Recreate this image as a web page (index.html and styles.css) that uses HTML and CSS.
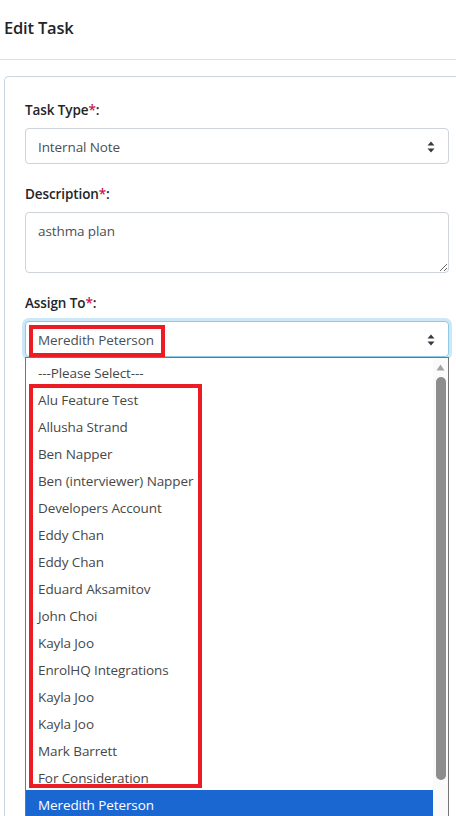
FILE: index.html
```html
<!DOCTYPE html>
<html lang="en">
<head>
<meta charset="utf-8">
<title>Edit Task</title>
<link rel="stylesheet" href="styles.css">
</head>
<body>
<header class="page-header">
  <h1 class="page-title">Edit Task</h1>
</header>
<main class="page-main">
  <div class="card">
    <div class="form-group">
      <label class="form-label">Task Type<span class="req">*</span>:</label>
      <div class="select">
        <span class="select-value">Internal Note</span>
        <svg class="select-arrow" width="8" height="12" viewBox="0 0 8 12"><path d="M4 0.5L7.5 4.5H0.5Z M4 11.5L7.5 7.5H0.5Z" fill="#343a40"/></svg>
      </div>
    </div>
    <div class="form-group">
      <label class="form-label">Description<span class="req">*</span>:</label>
      <textarea class="textarea">asthma plan</textarea>
    </div>
    <div class="form-group">
      <label class="form-label">Assign To<span class="req">*</span>:</label>
      <div class="select-wrap">
        <div class="select select-focus">
          <span class="select-value">Meredith Peterson</span>
          <svg class="select-arrow" width="8" height="12" viewBox="0 0 8 12"><path d="M4 0.5L7.5 4.5H0.5Z M4 11.5L7.5 7.5H0.5Z" fill="#343a40"/></svg>
          <div class="mark mark-value"></div>
        </div>
        <div class="dropdown">
          <ul class="options">
            <li class="option">---Please Select---</li>
            <li class="option">Alu Feature Test</li>
            <li class="option">Allusha Strand</li>
            <li class="option">Ben Napper</li>
            <li class="option">Ben (interviewer) Napper</li>
            <li class="option">Developers Account</li>
            <li class="option">Eddy Chan</li>
            <li class="option">Eddy Chan</li>
            <li class="option">Eduard Aksamitov</li>
            <li class="option">John Choi</li>
            <li class="option">Kayla Joo</li>
            <li class="option">EnrolHQ Integrations</li>
            <li class="option">Kayla Joo</li>
            <li class="option">Kayla Joo</li>
            <li class="option">Mark Barrett</li>
            <li class="option">For Consideration</li>
            <li class="option option-selected">Meredith Peterson</li>
          </ul>
          <div class="scrollbar">
            <svg class="scroll-up" width="9" height="7" viewBox="0 0 9 7"><path d="M4.5 0.5L8.5 6.5H0.5Z" fill="#a3a3a3"/></svg>
            <div class="scroll-thumb"></div>
          </div>
          <div class="mark mark-list"></div>
        </div>
      </div>
    </div>
  </div>
</main>
</body>
</html>
```

FILE: styles.css
```css
html, body {
  margin: 0;
  padding: 0;
  background: #ffffff;
  overflow: hidden;
}
body {
  width: 456px;
  height: 816px;
  font-family: "Open Sans", "Noto Sans", sans-serif;
  font-size: 13.5px;
  letter-spacing: -0.1px;
  color: #212529;
}
.page-header {
  box-sizing: border-box;
  height: 60px;
  border-bottom: 1px solid #dee2e6;
  display: flex;
  align-items: center;
  padding-left: 4px;
}
.page-title {
  margin: 0 0 4px 0;
  font-size: 16.5px;
  font-weight: 600;
  color: #212529;
  letter-spacing: -0.2px;
}
.page-main {
  padding: 16px 0 0 4px;
}
.card {
  box-sizing: border-box;
  width: 452px;
  height: 740px;
  border: 1px solid #c9d6df;
  border-right: none;
  border-bottom: none;
  border-radius: 5px 0 0 0;
  padding: 22px 0 0 20px;
}
.form-group {
  width: 424px;
  margin-bottom: 19px;
}
.form-label {
  display: block;
  font-weight: 600;
  line-height: 22px;
  margin-bottom: 7px;
  color: #212529;
}
.req {
  color: #c8174a;
}
.select {
  position: relative;
  box-sizing: border-box;
  height: 36px;
  border: 1px solid #ced4da;
  border-radius: 4px;
  display: flex;
  align-items: center;
  padding: 1px 0 0 12px;
  color: #495057;
  background: #fff;
}
.select-arrow {
  position: absolute;
  right: 13px;
  top: 12px;
}
.select-focus {
  border-color: #8fc9e8;
  box-shadow: 0 0 0 3px #cce8f6;
}
.textarea {
  display: block;
  box-sizing: border-box;
  width: 424px;
  height: 61px;
  margin: 0;
  border: 1px solid #ced4da;
  border-radius: 4px;
  padding: 9px 12px;
  font-family: inherit;
  font-size: 13.5px;
  letter-spacing: -0.1px;
  color: #495057;
  resize: vertical;
  outline: none;
}
.select-wrap {
  position: relative;
}
.dropdown {
  position: absolute;
  left: 0;
  top: 36px;
  box-sizing: border-box;
  width: 424px;
  height: 459px;
  overflow: hidden;
  border: 1px solid #767676;
  border-bottom: none;
  background: #fff;
  display: flex;
  z-index: 2;
}
.options {
  list-style: none;
  margin: 0;
  padding: 0;
  flex: 1;
}
.option {
  box-sizing: border-box;
  height: 27px;
  line-height: 24px;
  padding: 3px 0 0 12px;
  color: #474747;
  white-space: nowrap;
}
.option-selected {
  background: #1a67d2;
  color: #fff;
}
.scrollbar {
  position: relative;
  width: 15px;
  background: #fafafa;
}
.scroll-up {
  position: absolute;
  left: 3px;
  top: 6px;
}
.scroll-thumb {
  position: absolute;
  left: 3px;
  top: 19px;
  width: 10px;
  height: 403px;
  border-radius: 5px;
  background: #8d8d8d;
}
.mark {
  position: absolute;
  box-sizing: border-box;
  border: 4px solid #ec1c24;
  pointer-events: none;
}
.mark-value {
  left: 3px;
  top: 3px;
  width: 136px;
  height: 32px;
}
.mark-list {
  left: 3px;
  top: 26px;
  width: 173px;
  height: 404px;
}
```
